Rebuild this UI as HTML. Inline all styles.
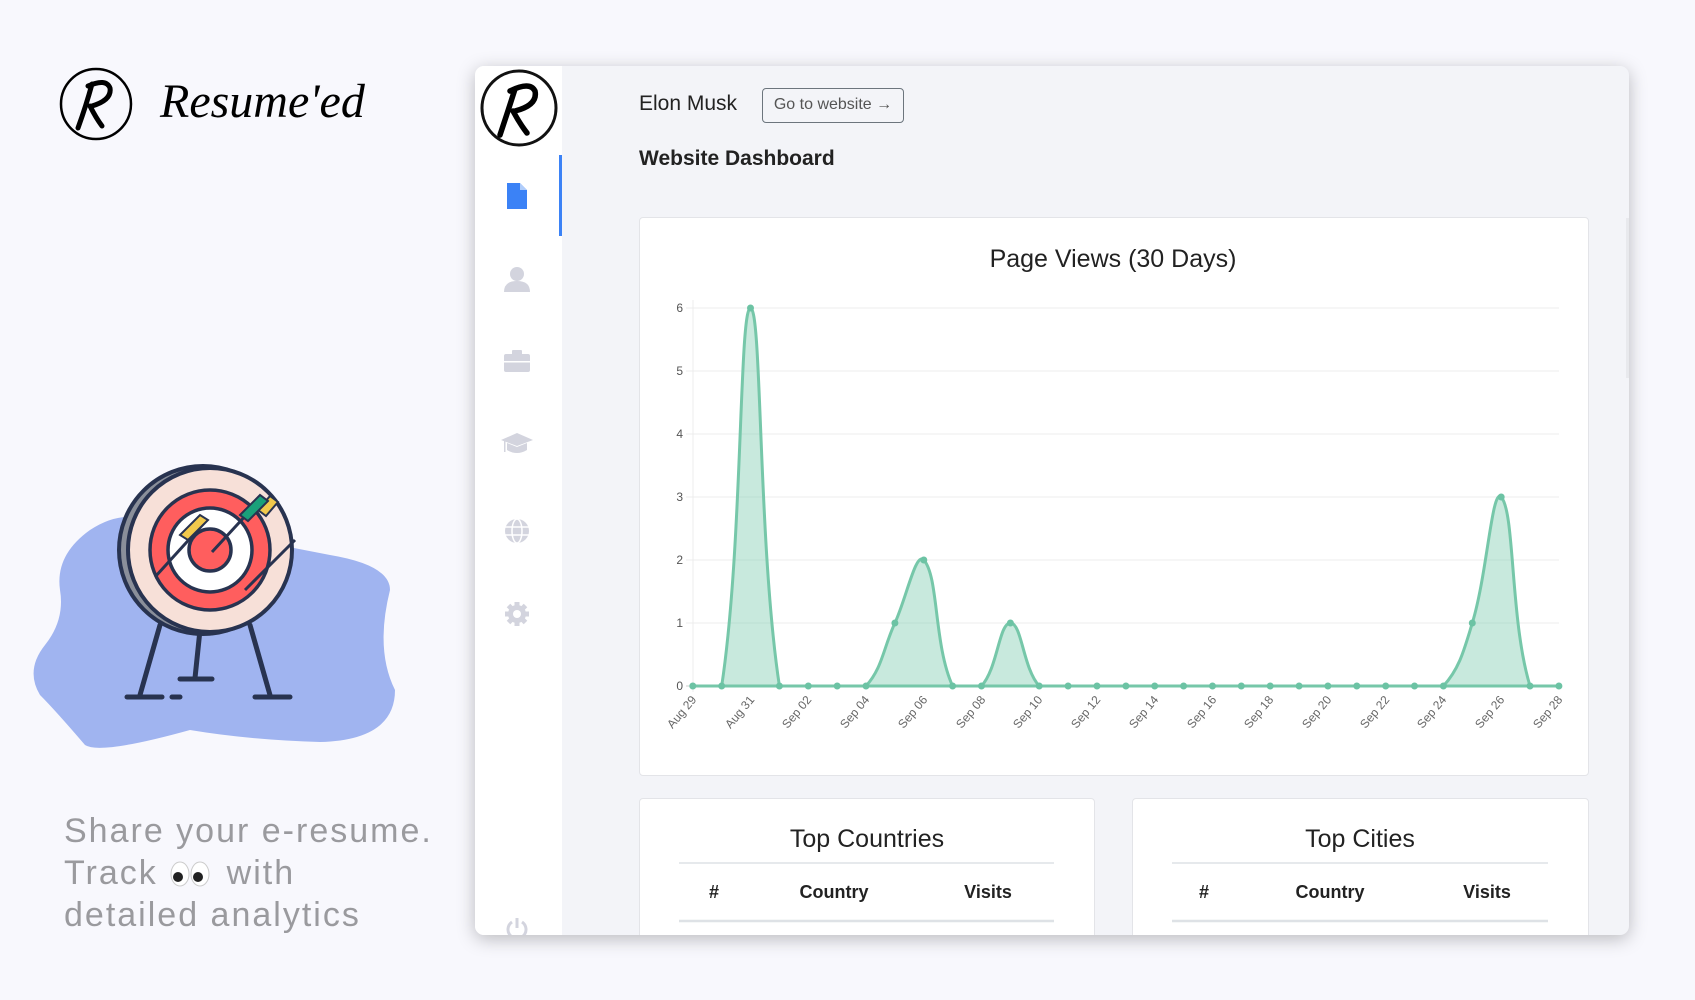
<!DOCTYPE html>
<html><head><meta charset="utf-8"><style>
*{margin:0;padding:0;box-sizing:border-box}
body{width:1695px;height:1000px;background:#f8f8fd;font-family:"Liberation Sans",sans-serif;position:relative;overflow:hidden}
.abs{position:absolute}
.win{left:475px;top:66px;width:1154px;height:869px;background:#f3f4f8;border-radius:9px;box-shadow:0 4px 18px rgba(0,0,0,.25);overflow:hidden}
.side{left:0;top:0;width:87px;height:100%;background:#fff}
.card{background:#fff;border:1px solid #e3e4e8;border-radius:4px}
</style></head><body>
<svg class="abs" style="left:58px;top:66px" width="76" height="76" viewBox="0 0 76 76"><circle cx="38" cy="38" r="35" fill="none" stroke="#000" stroke-width="2.5"/><path d="M30 20 Q48 12 52 22 Q54 34 34 40 M34 18 Q28 40 20 62 M32 40 Q38 52 44 60" fill="none" stroke="#000" stroke-width="5" stroke-linecap="round"/></svg>
<div class="abs" style="left:160px;top:74px;font-family:'Liberation Serif',serif;font-style:italic;font-size:48px;color:#000">Resume'ed</div>
<svg class="abs" style="left:0;top:450px" width="450" height="320" viewBox="0 0 450 320">
<path d="M90 80 Q120 60 150 70 L330 105 Q390 115 390 140 Q375 200 395 240 Q395 290 320 292 Q250 290 190 280 Q100 305 85 295 Q55 260 40 245 Q25 220 45 195 Q65 170 60 140 Q55 105 90 80Z" fill="#a0b4f0"/>
<g stroke="#283350" stroke-width="5" stroke-linecap="round"><line x1="160" y1="175" x2="140" y2="245"/><line x1="200" y1="180" x2="195" y2="228"/><line x1="250" y1="175" x2="270" y2="245"/><line x1="127" y1="247" x2="162" y2="247"/><line x1="172" y1="247" x2="180" y2="247"/><line x1="180" y1="229" x2="212" y2="229"/><line x1="255" y1="247" x2="290" y2="247"/></g>
<circle cx="203" cy="100" r="84" fill="#8a8f9a" stroke="#283350" stroke-width="4"/>
<circle cx="210" cy="100" r="82" fill="#f7e0d8" stroke="#283350" stroke-width="4"/>
<circle cx="210" cy="100" r="60" fill="#ff5e5e" stroke="#283350" stroke-width="3.5"/>
<circle cx="210" cy="100" r="42" fill="#fff" stroke="#283350" stroke-width="3.5"/>
<circle cx="210" cy="100" r="21" fill="#ff5e5e" stroke="#283350" stroke-width="3.5"/>
<g stroke="#283350" stroke-width="3"><line x1="155" y1="127" x2="205" y2="72"/><line x1="212" y1="102" x2="260" y2="50"/><line x1="245" y1="140" x2="295" y2="90"/></g>
<path d="M180 85 l20 -20 8 5 -20 20z M258 60 l12 -14 8 6 -12 14z" fill="#f2c94c" stroke="#283350" stroke-width="2"/>
<path d="M240 65 l20 -20 8 6 -20 20z" fill="#1aa07a" stroke="#283350" stroke-width="2"/>
</svg>
<div class="abs" style="left:64px;top:810px;font-size:34px;line-height:42px;color:#9a9a9e;letter-spacing:2px">Share your e-resume.<br>Track <span style="display:inline-block;width:46px;position:relative;top:4px"><svg width="42" height="28" viewBox="0 0 42 28"><ellipse cx="11" cy="14" rx="9" ry="12" fill="#fff" stroke="#ccc"/><ellipse cx="31" cy="14" rx="9" ry="12" fill="#fff" stroke="#ccc"/><circle cx="9" cy="17" r="5" fill="#222"/><circle cx="29" cy="17" r="5" fill="#222"/></svg></span> with<br>detailed analytics</div>
<div class="abs win">
 <div class="abs side">
  <svg class="abs" style="left:5px;top:3px" width="78" height="78" viewBox="0 0 78 78"><circle cx="39" cy="39" r="37" fill="#fff" stroke="#111" stroke-width="3"/><path d="M30 22 Q50 12 55 22 Q58 36 35 42 M35 20 Q28 42 20 66 M33 42 Q40 55 47 64" fill="none" stroke="#000" stroke-width="5.5" stroke-linecap="round"/></svg>
  <div class="abs" style="left:84px;top:89px;width:3px;height:81px;background:#3b82f6"></div>
  <svg class="abs" style="left:32px;top:117px" width="20" height="26" viewBox="0 0 20 26"><path d="M0 0H13L20 7V26H0Z" fill="#3b82f6"/><path d="M13 0V7H20" fill="#fff" opacity=".6"/></svg>
  <svg class="abs" style="left:29px;top:200px" width="26" height="26" viewBox="0 0 26 26" fill="#d3d4de"><circle cx="13" cy="8" r="7"/><path d="M0 26 Q0 15 13 15 Q26 15 26 26Z"/></svg>
  <svg class="abs" style="left:29px;top:284px" width="26" height="22" viewBox="0 0 26 22" fill="#d3d4de"><rect x="0" y="4" width="26" height="18" rx="2"/><rect x="8" y="0" width="10" height="5" rx="1"/><rect x="0" y="11" width="26" height="1.5" fill="#fff"/></svg>
  <svg class="abs" style="left:26px;top:367px" width="32" height="22" viewBox="0 0 32 22" fill="#d3d4de"><path d="M16 0 L32 7 16 13 0 7Z"/><path d="M6 10 V17 Q16 23 26 17 V10 L16 14Z"/><rect x="3" y="8" width="1.5" height="11"/></svg>
  <svg class="abs" style="left:29px;top:452px" width="26" height="26" viewBox="0 0 26 26" fill="none"><circle cx="13" cy="13" r="12" fill="#d3d4de"/><g stroke="#fff" stroke-width="1.5"><ellipse cx="13" cy="13" rx="5" ry="12"/><line x1="1" y1="9" x2="25" y2="9"/><line x1="1" y1="17" x2="25" y2="17"/></g></svg>
  <svg class="abs" style="left:29px;top:535px" width="26" height="26" viewBox="0 0 26 26"><g fill="#d3d4de"><circle cx="13" cy="13" r="9"/><g stroke="#d3d4de" stroke-width="5"><line x1="13" y1="1" x2="13" y2="25"/><line x1="1" y1="13" x2="25" y2="13"/><line x1="4.5" y1="4.5" x2="21.5" y2="21.5"/><line x1="21.5" y1="4.5" x2="4.5" y2="21.5"/></g></g><circle cx="13" cy="13" r="4" fill="#fff"/></svg>
  <svg class="abs" style="left:30px;top:850px" width="24" height="24" viewBox="0 0 24 24" fill="none" stroke="#d3d4de" stroke-width="3"><path d="M7 6 A9 9 0 1 0 17 6"/><line x1="12" y1="2" x2="12" y2="12"/></svg>
 </div>
 <div class="abs" style="left:164px;top:26px;font-size:21px;color:#222">Elon Musk</div>
 <div class="abs" style="left:287px;top:22px;width:142px;height:35px;border:1.5px solid #6c757d;border-radius:4px;font-size:16px;color:#555;line-height:32px;text-align:center">Go to website →</div>
 <div class="abs" style="left:164px;top:81px;font-size:21px;font-weight:bold;color:#222">Website Dashboard</div>
 <div class="abs" style="left:1151px;top:152px;width:3px;height:160px;background:#e8e9ed"></div>
 <div class="abs card" style="left:164px;top:151px;width:950px;height:559px"></div>
 <div class="abs card" style="left:164px;top:732px;width:456px;height:200px"></div>
 <div class="abs card" style="left:657px;top:732px;width:457px;height:200px"></div>
</div>
<svg class="abs" style="left:0;top:0" width="1695" height="1000">
<text x="1113" y="267" text-anchor="middle" font-size="25" fill="#222" font-family="Liberation Sans">Page Views (30 Days)</text>
<g stroke="#ececec" stroke-width="1"><line x1="686" y1="308" x2="1559" y2="308"/><line x1="686" y1="371" x2="1559" y2="371"/><line x1="686" y1="434" x2="1559" y2="434"/><line x1="686" y1="497" x2="1559" y2="497"/><line x1="686" y1="560" x2="1559" y2="560"/><line x1="686" y1="623" x2="1559" y2="623"/><line x1="693" y1="300" x2="693" y2="692"/></g>
<line x1="686" y1="686" x2="1559" y2="686" stroke="#ccc"/>
<g font-size="12" fill="#555" text-anchor="end" font-family="Liberation Sans"><text x="683" y="312">6</text><text x="683" y="375">5</text><text x="683" y="438">4</text><text x="683" y="501">3</text><text x="683" y="564">2</text><text x="683" y="627">1</text><text x="683" y="690">0</text></g>
<g fill="rgba(124,202,173,0.42)" stroke="#76c7a9" stroke-width="3">
<path d="M721.7,686 C743,545 739,308 750.5,308 C762,308 758,545 779.4,686Z"/>
<path d="M866,686 C882.3,668.2 883.3,648.2 894.9,623 C906.5,597.8 915.7,551.2 923.8,560 C938.8,576.4 933.7,644.8 952.6,686Z"/>
<path d="M981.5,686 C997.8,668.2 998.9,623 1010.4,623 C1021.9,623 1022.9,668.2 1039.2,686Z"/>
<path d="M1443.4,686 C1459.7,668.2 1464.2,649.5 1472.3,623 C1487.3,573.9 1491.9,486.9 1501.2,497 C1515,512 1510,620.4 1530,686Z"/>
</g>
<line x1="693" y1="686" x2="1559" y2="686" stroke="#76c7a9" stroke-width="3"/>
<g fill="#6cc3a4">
<circle cx="692.8" cy="686" r="3.5"/><circle cx="721.7" cy="686" r="3.5"/><circle cx="750.5" cy="308" r="3.5"/><circle cx="779.4" cy="686" r="3.5"/><circle cx="808.3" cy="686" r="3.5"/><circle cx="837.2" cy="686" r="3.5"/><circle cx="866" cy="686" r="3.5"/><circle cx="894.9" cy="623" r="3.5"/><circle cx="923.8" cy="560" r="3.5"/><circle cx="952.6" cy="686" r="3.5"/><circle cx="981.5" cy="686" r="3.5"/><circle cx="1010.4" cy="623" r="3.5"/><circle cx="1039.2" cy="686" r="3.5"/><circle cx="1068.1" cy="686" r="3.5"/><circle cx="1097" cy="686" r="3.5"/><circle cx="1125.9" cy="686" r="3.5"/><circle cx="1154.7" cy="686" r="3.5"/><circle cx="1183.6" cy="686" r="3.5"/><circle cx="1212.5" cy="686" r="3.5"/><circle cx="1241.3" cy="686" r="3.5"/><circle cx="1270.2" cy="686" r="3.5"/><circle cx="1299.1" cy="686" r="3.5"/><circle cx="1327.9" cy="686" r="3.5"/><circle cx="1356.8" cy="686" r="3.5"/><circle cx="1385.7" cy="686" r="3.5"/><circle cx="1414.5" cy="686" r="3.5"/><circle cx="1443.4" cy="686" r="3.5"/><circle cx="1472.3" cy="623" r="3.5"/><circle cx="1501.2" cy="497" r="3.5"/><circle cx="1530" cy="686" r="3.5"/><circle cx="1558.9" cy="686" r="3.5"/>
</g>
<g font-size="12" fill="#666" text-anchor="end" font-family="Liberation Sans">
<text transform="translate(697,700) rotate(-50)">Aug 29</text><text transform="translate(755,700) rotate(-50)">Aug 31</text><text transform="translate(812,700) rotate(-50)">Sep 02</text><text transform="translate(870,700) rotate(-50)">Sep 04</text><text transform="translate(928,700) rotate(-50)">Sep 06</text><text transform="translate(986,700) rotate(-50)">Sep 08</text><text transform="translate(1043,700) rotate(-50)">Sep 10</text><text transform="translate(1101,700) rotate(-50)">Sep 12</text><text transform="translate(1159,700) rotate(-50)">Sep 14</text><text transform="translate(1217,700) rotate(-50)">Sep 16</text><text transform="translate(1274,700) rotate(-50)">Sep 18</text><text transform="translate(1332,700) rotate(-50)">Sep 20</text><text transform="translate(1390,700) rotate(-50)">Sep 22</text><text transform="translate(1447,700) rotate(-50)">Sep 24</text><text transform="translate(1505,700) rotate(-50)">Sep 26</text><text transform="translate(1563,700) rotate(-50)">Sep 28</text>
</g>
<g font-family="Liberation Sans" fill="#222">
<text x="867" y="847" text-anchor="middle" font-size="25">Top Countries</text>
<text x="1360" y="847" text-anchor="middle" font-size="25">Top Cities</text>
<g font-size="18" font-weight="bold" text-anchor="middle"><text x="714" y="898">#</text><text x="834" y="898">Country</text><text x="988" y="898">Visits</text><text x="1204" y="898">#</text><text x="1330" y="898">Country</text><text x="1487" y="898">Visits</text></g>
</g>
<g stroke="#dee2e6" stroke-width="1.5"><line x1="679" y1="863" x2="1054" y2="863"/><line x1="1172" y1="863" x2="1548" y2="863"/></g>
<g stroke="#dee2e6" stroke-width="2.5"><line x1="679" y1="921" x2="1054" y2="921"/><line x1="1172" y1="921" x2="1548" y2="921"/></g>
</svg>
</body></html>
